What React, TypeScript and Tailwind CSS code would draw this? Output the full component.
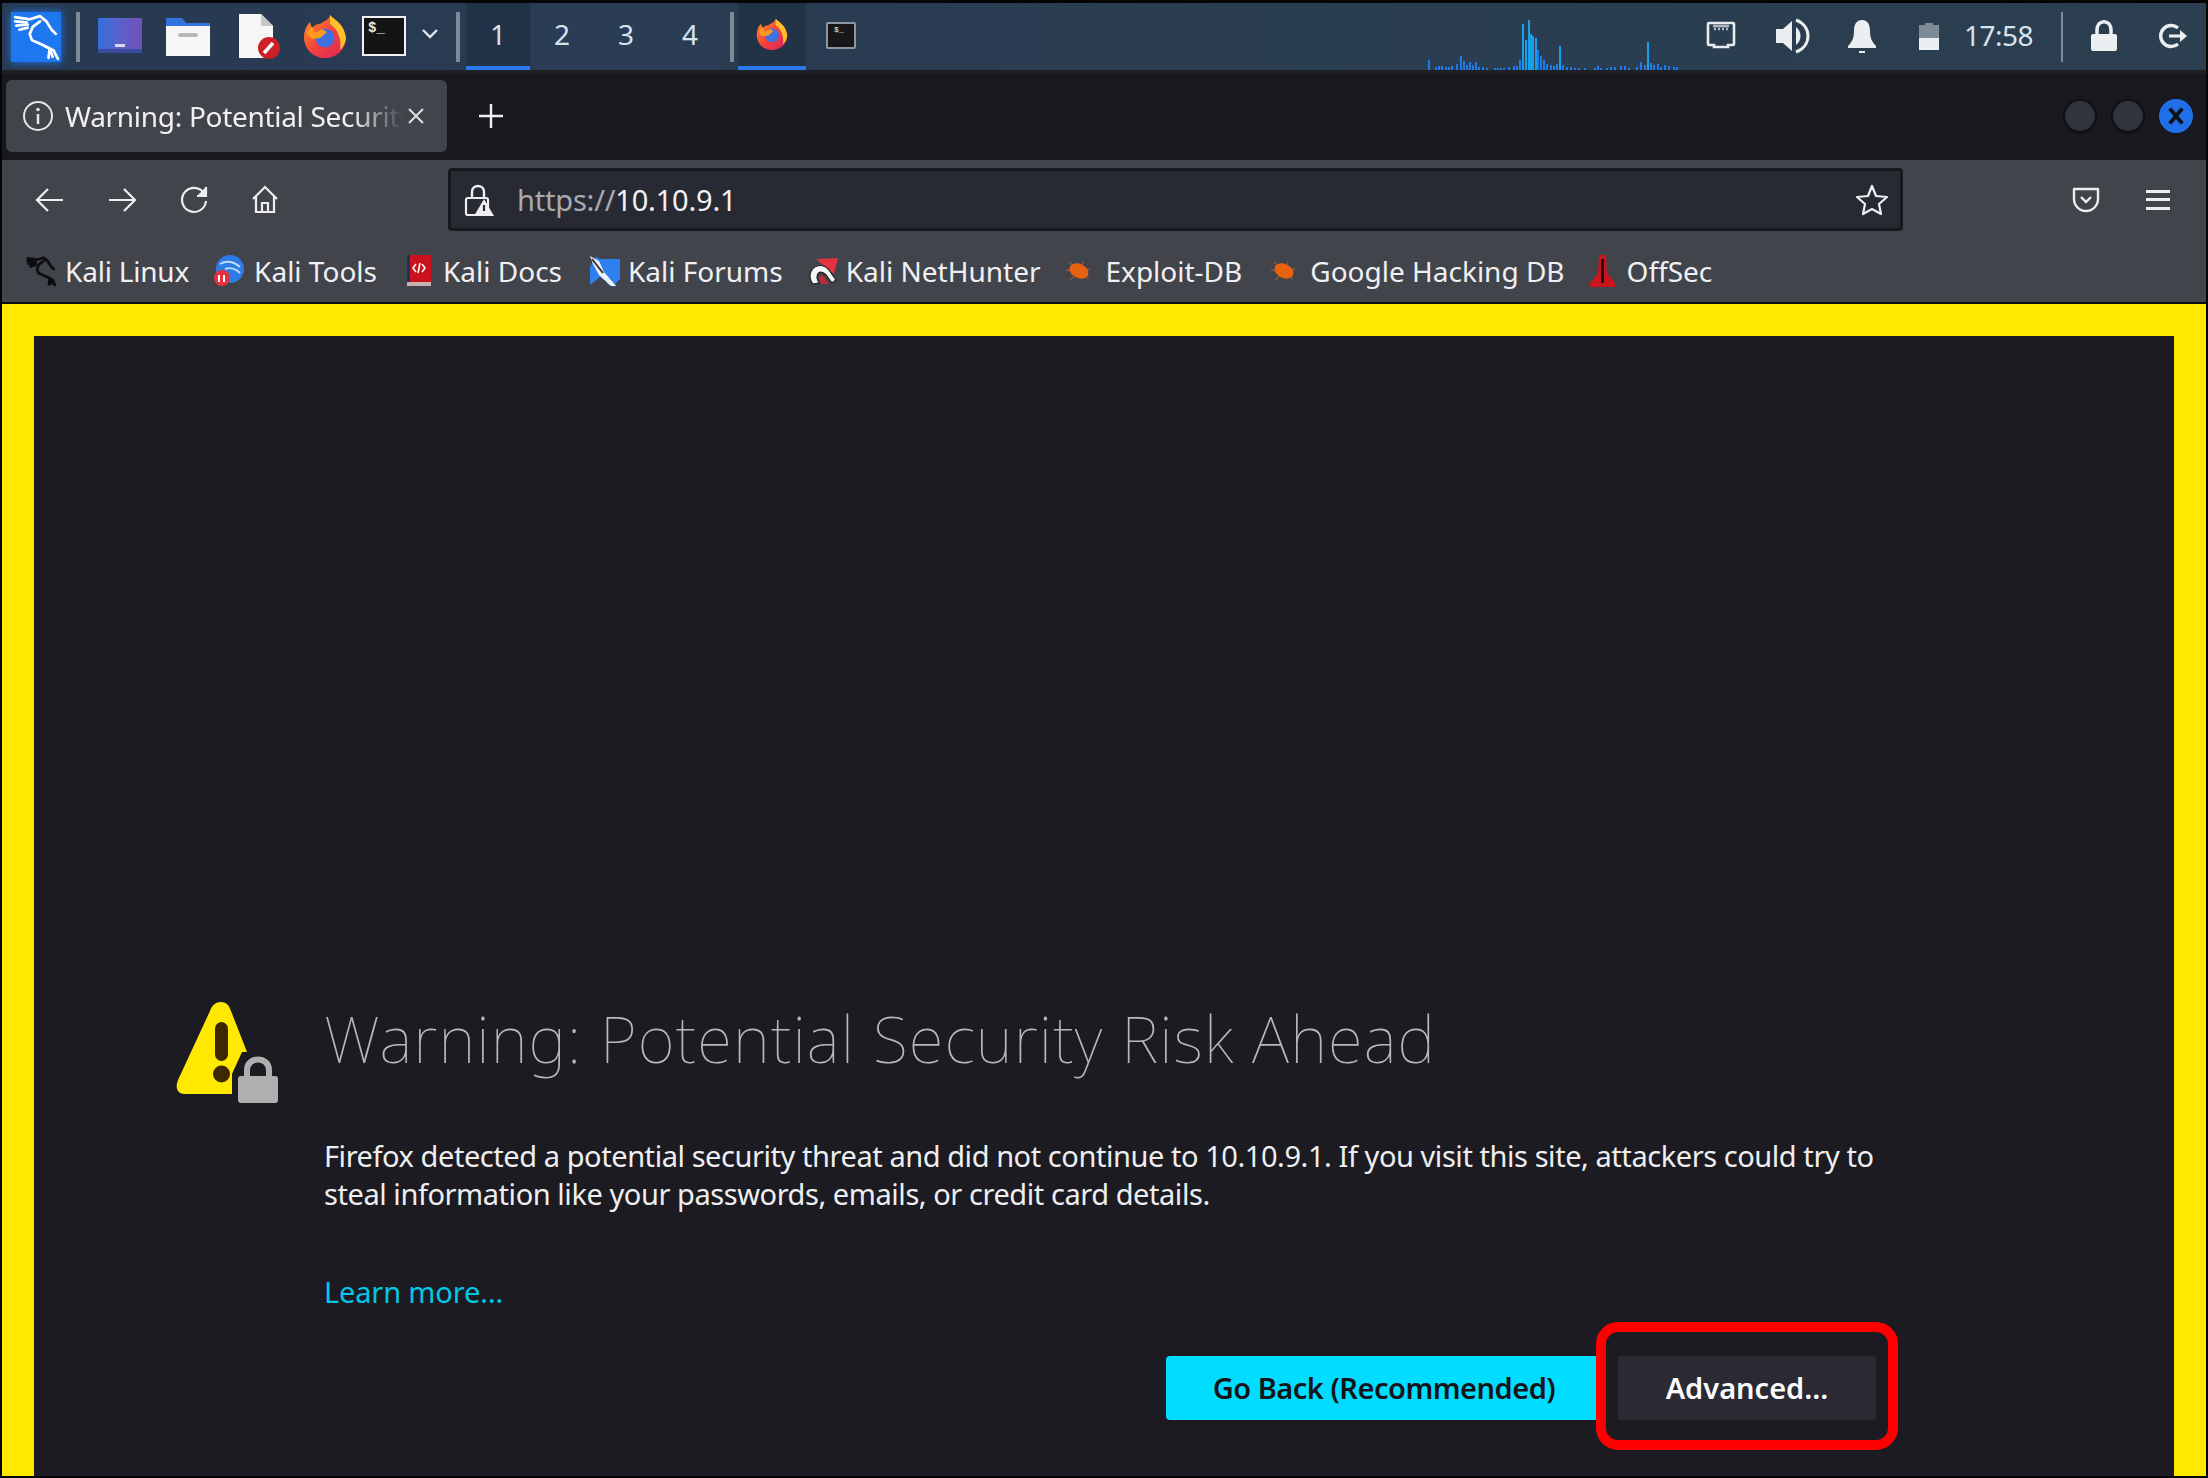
import type { ReactNode } from "react";

const graphBars = [
  [0, 10], [7, 3], [10, 4], [13, 4], [17, 3], [20, 3], [23, 4], [28, 6], [32, 14], [35, 9], [38, 5], [41, 8], [44, 5], [47, 8], [50, 3], [54, 3], [58, 2],
  [66, 2], [69, 2], [72, 2], [75, 2], [80, 3], [85, 4], [88, 4], [91, 10], [94, 46], [97, 30], [100, 50], [102, 36], [104, 34], [107, 32], [109, 20], [112, 14], [115, 10],
  [118, 6], [122, 5], [125, 4], [128, 6], [131, 24], [134, 5], [138, 3], [142, 3], [146, 2], [150, 2], [156, 2], [166, 2], [169, 4], [172, 2], [178, 2], [182, 3], [186, 3],
  [192, 4], [196, 4], [200, 2], [208, 3], [212, 8], [216, 5], [219, 28], [222, 7], [225, 5], [229, 6], [232, 3], [236, 5], [240, 4], [245, 3], [248, 3],
];

const Separator = ({ className }: { className: string }) => (
  <div className={`h-[50px] w-1 shrink-0 bg-[#7d8a98] ${className}`} />
);

const TaskIcon = ({ width, className, children }: { width: number; className: string; children: ReactNode }) => (
  <svg viewBox={`0 0 ${width} 48`} width={width} height={48} className={`shrink-0 ${className}`}>
    {children}
  </svg>
);

const KaliDragon = ({ color, width = 2.6 }: { color: string; width?: number }) => (
  <g fill="none" stroke={color} strokeWidth={width} strokeLinecap="round" strokeLinejoin="round">
    <path d="M3 5 L17 7 L27 4 L33 9 L38 17 L42 21" />
    <path d="M3 9 L14 10 M4 13 L15 12 M7 17 L15 15" />
    <path d="M27 9 L20 14 L17 21 L19 27 L28 31 L36 35 L39 43" />
    <path d="M32 33 L40 37 L44 45 M36 36 L35 44" />
  </g>
);

const Firefox = ({ size }: { size: number }) => (
  <svg viewBox="0 0 44 44" width={size} height={size} className="shrink-0">
    <defs>
      <linearGradient id={`fx${size}`} x1="0" y1="0" x2="1" y2="1">
        <stop offset="0" stopColor="#ff9a1f" />
        <stop offset="0.5" stopColor="#f5433c" />
        <stop offset="1" stopColor="#d9215a" />
      </linearGradient>
    </defs>
    <path d="M27 1 C31 6 41 9 43 24 C43 36 33 44 22 44 C9 44 1 34 1 23 C1 17 3 12 7 8 L9 15 C11 11 14 10 17 10 C21 7 26 6 27 1Z" fill={`url(#fx${size})`} />
    <path d="M27 1 C31 6 41 9 43 24 C42 30 40 33 37 36 C39 26 35 15 27 10Z" fill="#ffc02e" />
    <circle cx="22" cy="24" r="9.5" fill="#3f6fe0" />
    <path d="M4 19 L9 12 L12 19 L19 15 L24 18 L17 24 L8 25Z" fill="#ff9a1f" />
  </svg>
);

function BugIcon() {
  return (
    <svg viewBox="0 0 30 24" width={30} height={24} className="-mx-[2px] shrink-0">
      <path d="M5 3 L11 8 M2 11 L9 12 M6 21 L12 16 M19 3 L18 7 M26 10 L22 11 M24 20 L20 16" stroke="#8a5a3a" strokeWidth="1.4" />
      <ellipse cx="15" cy="12" rx="10" ry="7" transform="rotate(25 15 12)" fill="#e8620f" />
    </svg>
  );
}

const bookmarks: { label: string; icon: ReactNode; iconWidth: number; gap: number; next: number }[] = [
  {
    label: "Kali Linux",
    iconWidth: 32,
    gap: 8,
    next: 25,
    icon: <svg viewBox="0 0 46 48" width={32} height={32}><KaliDragon color="#0c0c0e" width={4} /></svg>,
  },
  {
    label: "Kali Tools",
    iconWidth: 30,
    gap: 10,
    next: 30,
    icon: (
      <svg viewBox="0 0 30 32" width={30} height={32}>
        <circle cx="16" cy="14" r="14" fill="#2d7be5" />
        <path d="M6 9 C13 5 20 7 26 12 M11 14 C16 12 22 14 26 18" stroke="#c3dcfa" strokeWidth="2" fill="none" />
        <circle cx="8" cy="23" r="8" fill="#e8303a" />
        <path d="M5 20 V27 M10 20 V27" stroke="#fff" strokeWidth="2" />
      </svg>
    ),
  },
  {
    label: "Kali Docs",
    iconWidth: 24,
    gap: 12,
    next: 26,
    icon: (
      <svg viewBox="0 0 24 32" width={24} height={32}>
        <rect x="0" y="0" width="24" height="27" fill="#c9121b" />
        <rect x="0" y="0" width="3" height="27" fill="#17305f" />
        <rect x="0" y="27" width="24" height="4" fill="#c4b3b3" />
        <path d="M9 9 L6 13 L9 17 M15 9 L18 13 L15 17 M13 8 L11 18" stroke="#fff" strokeWidth="1.6" fill="none" />
      </svg>
    ),
  },
  {
    label: "Kali Forums",
    iconWidth: 32,
    gap: 8,
    next: 23,
    icon: (
      <svg viewBox="0 0 32 32" width={32} height={32}>
        <path d="M8 4 H32 V24 L26 30 H20Z" fill="#2f80ed" />
        <path d="M2 12 L8 2 L12 4 L16 16 L28 30 L26 32 L12 22 L2 30Z" fill="#2f80ed" />
        <path d="M2 1 L11 6 L16 17 L28 31 L23 31 L11 20 L5 9Z" fill="#eef2f7" />
        <path d="M4 4 L15 18" stroke="#333" strokeWidth="2" />
      </svg>
    ),
  },
  {
    label: "Kali NetHunter",
    iconWidth: 34,
    gap: 6,
    next: 25,
    icon: (
      <svg viewBox="0 0 34 30" width={34} height={30}>
        <path d="M10 3 L32 2 L28 18 Z" fill="#e5323f" />
        <path d="M4 19 C6 8 17 7 23 14 L30 24 L26 27 L20 19 C15 14 11 16 11 22 L13 27 L7 28 C5 26 4 22 4 19Z" fill="#f6f6f6" stroke="#1d1d20" strokeWidth="1.2" />
        <path d="M13 21 C15 18 18 20 20 24 L23 28 L15 28Z" fill="#c4283a" />
      </svg>
    ),
  },
  {
    label: "Exploit-DB",
    iconWidth: 27,
    gap: 13,
    next: 29,
    icon: <BugIcon />,
  },
  {
    label: "Google Hacking DB",
    iconWidth: 26,
    gap: 13,
    next: 25,
    icon: <BugIcon />,
  },
  {
    label: "OffSec",
    iconWidth: 25,
    gap: 12,
    next: 0,
    icon: (
      <svg viewBox="0 0 25 32" width={25} height={32}>
        <path d="M9 0 H16 L17 18 L25 28 V32 H0 V28 L8 18Z" fill="#c9161c" />
        <path d="M12.5 4 V28" stroke="#2a0d0f" strokeWidth="3" />
      </svg>
    ),
  },
];

const Panel = () => (
  <div className="flex h-[67px] shrink-0 items-start bg-gradient-to-r from-[#283a52] to-[#2b3f50]">
    <div className="ml-[9px] mt-[9px] h-[50px] w-[50px] shrink-0 bg-[#1d78f0] shadow-[0_0_8px_#1d78f0]">
      <svg viewBox="0 0 46 48" width={50} height={50}><KaliDragon color="#ffffff" /></svg>
    </div>
    <Separator className="ml-[15px] mt-[9px]" />
    <div className="ml-[18px] mt-[15px] flex h-[35px] w-[44px] shrink-0 items-end justify-center bg-gradient-to-r from-[#2f6fdc] to-[#7350b8] pb-1 shadow-[inset_0_-4px_0_#3a4a9c]">
      <span className="mb-[2px] h-[3px] w-[10px] bg-[#d8d8e8]" />
    </div>
    <TaskIcon width={44} className="ml-6 mt-[9px]">
      <path d="M0 6 H16 L20 11 H44 V18 H0Z" fill="#2f74de" />
      <rect x="0" y="14" width="44" height="30" fill="#f6f6f6" />
      <rect x="12" y="21" width="20" height="4" rx="2" fill="#b8b8b8" />
    </TaskIcon>
    <TaskIcon width={42} className="ml-[29px] mt-[9px]">
      <path d="M0 2 H22 L34 14 V46 H0Z" fill="#f6f6f6" />
      <path d="M22 2 L34 14 H22Z" fill="#c8c8c8" />
      <circle cx="30" cy="36" r="11" fill="#cc1f28" />
      <path d="M25 41 L34 31" stroke="#fff" strokeWidth="3.5" />
    </TaskIcon>
    <div className="ml-[22px] mt-[11px]"><Firefox size={44} /></div>
    <div className="ml-[15px] mt-[13px] flex h-[40px] w-[44px] shrink-0 flex-col border-2 border-[#f2f2f2] bg-[#141414] pl-[4px] pt-[1px] font-['Liberation_Mono',monospace] text-[14px] leading-[18px] font-bold text-[#e8e8e8]">
      $_
    </div>
    <svg viewBox="0 0 16 10" width={16} height={10} className="ml-4 mt-[26px] shrink-0">
      <path d="M1 1 L8 8 L15 1" stroke="#e4e8ec" strokeWidth="2.4" fill="none" />
    </svg>
    <Separator className="ml-[18px] mt-[9px]" />
    <div className="ml-[6px] flex h-full font-['Noto_Sans',sans-serif] text-[28px] text-[#d6e2ee]">
      {["1", "2", "3", "4"].map((n, i) => (
        <div
          key={n}
          className={
            i === 0
              ? "flex w-[64px] items-center justify-center border-b-[4px] border-[#2a78ea] bg-[#233347] pb-[2px]"
              : "flex w-[64px] items-center justify-center bg-[#2a3d54] pb-[6px]"
          }
        >
          {n}
        </div>
      ))}
    </div>
    <Separator className="ml-[8px] mt-[9px]" />
    <div className="ml-[4px] flex h-full w-[68px] shrink-0 items-center justify-center border-b-[4px] border-[#2a78ea] bg-[#233347] pb-[2px]">
      <Firefox size={32} />
    </div>
    <div className="ml-[20px] mt-[19px] h-[27px] w-[30px] shrink-0 rounded-[2px] border-2 border-[#8d96a0] bg-[#171719] pl-[6px] font-['Liberation_Mono',monospace] text-[8px] leading-[12px] text-[#e8e8e8]">
      $_
    </div>
    <svg width={252} height={67} className="ml-[572px] shrink-0">
      {graphBars.map(([x, h]) => (
        <rect key={x} x={x} y={67 - h} width={2} height={h} fill={h > 20 ? "#16a0ea" : "#1e7ae8"} />
      ))}
    </svg>
    <TaskIcon width={30} className="ml-[26px] mt-[12px]">
      <path d="M3 8 H27 Q28 8 28 9 V29 Q28 30 27 30 H22 V32 H8 V30 H3 Q2 30 2 29 V9 Q2 8 3 8Z" fill="none" stroke="#e8ecef" strokeWidth="2.6" />
      <path d="M7 11 H23 M8 14 H10 M12 14 H14 M16 14 H18 M20 14 H22" stroke="#aeb7bf" strokeWidth="2.4" />
    </TaskIcon>
    <TaskIcon width={40} className="ml-[36px] mt-[11px]">
      <path d="M4 15 H11 L20 7 V37 L11 29 H4Z" fill="#eceff2" />
      <path d="M24 6 C40 12 40 32 24 38" stroke="#eceff2" strokeWidth="3" fill="none" />
      <path d="M24 13 C30 18 30 26 24 31Z" fill="#eceff2" />
    </TaskIcon>
    <TaskIcon width={30} className="ml-[35px] mt-[10px]">
      <path d="M15 7 C21 7 23 12 23 18 C23 25 25 29 29 33 V35 H1 V33 C5 29 7 25 7 18 C7 12 9 7 15 7Z" fill="#eceff2" />
      <rect x="12" y="38" width="6" height="2" fill="#eceff2" />
    </TaskIcon>
    <TaskIcon width={22} className="ml-[41px] mt-[20px]">
      <rect x="7" y="0" width="8" height="2" fill="#7d8c96" />
      <rect x="1" y="2" width="20" height="13" fill="#7d8c96" />
      <rect x="1" y="15" width="20" height="12" fill="#eceff2" />
    </TaskIcon>
    <div className="ml-[24px] mt-[14px] shrink-0 font-['Noto_Sans',sans-serif] text-[28px] leading-[36px] tracking-[-0.5px] text-[#d6e2ee]">
      17:58
    </div>
    <div className="ml-[28px] mt-[9px] h-[50px] w-[2px] shrink-0 bg-[#7d8a98]" />
    <TaskIcon width={28} className="ml-[27px] mt-[17px]">
      <path d="M7 16 V10 C7 -1 21 -1 21 10 V16" stroke="#eceff2" strokeWidth="3.5" fill="none" />
      <rect x="1" y="14" width="26" height="17" rx="2" fill="#eceff2" />
    </TaskIcon>
    <TaskIcon width={30} className="ml-[40px] mt-[12px]">
      <path d="M20 13 A10.5 10.5 0 1 0 20 29" stroke="#eceff2" strokeWidth="3.4" fill="none" />
      <path d="M11 21 H24" stroke="#eceff2" strokeWidth="3" />
      <path d="M22 15 L29 21 L22 27Z" fill="#eceff2" />
    </TaskIcon>
  </div>
);

const TabBar = () => (
  <div className="flex h-[90px] shrink-0 items-center border-t-[4px] border-[#1f2024] bg-[#18191e] pb-[2px] pl-[4px] font-['Noto_Sans',sans-serif]">
    <div className="flex h-[72px] w-[441px] shrink-0 items-center rounded-[6px] bg-[#42444c] pl-[16px]">
      <svg viewBox="0 0 32 32" width={32} height={32} className="shrink-0">
        <circle cx="16" cy="16" r="14" stroke="#e6e6e8" strokeWidth="2" fill="none" />
        <path d="M16 14 V24" stroke="#e6e6e8" strokeWidth="2.5" />
        <circle cx="16" cy="9.5" r="1.8" fill="#e6e6e8" />
      </svg>
      <div className="ml-[11px] w-[338px] overflow-hidden whitespace-nowrap text-[28px] tracking-[-0.3px] text-[#f0f0f2] [mask-image:linear-gradient(to_right,black_85%,transparent)]">
        Warning: Potential Security Risk Ahead
      </div>
      <svg viewBox="0 0 18 18" width={18} height={18} className="ml-[4px] shrink-0">
        <path d="M2 2 L16 16 M16 2 L2 16" stroke="#e6e6e8" strokeWidth="1.8" />
      </svg>
    </div>
    <svg viewBox="0 0 26 26" width={26} height={26} className="ml-[31px] shrink-0">
      <path d="M13 1 V25 M1 13 H25" stroke="#f0f0f2" strokeWidth="2.4" />
    </svg>
    <div className="ml-auto mr-[13px] flex gap-[14px]">
      <div className="h-[34px] w-[34px] rounded-full border-2 border-[#0f1014] bg-[#31343f]" />
      <div className="h-[34px] w-[34px] rounded-full border-2 border-[#0f1014] bg-[#31343f]" />
      <div className="flex h-[34px] w-[34px] items-center justify-center rounded-full bg-[#1f6fe8]">
        <svg viewBox="0 0 16 16" width={20} height={20}>
          <path d="M3 2 L13 14 M13 2 L3 14" stroke="#0e1116" strokeWidth="3" />
        </svg>
      </div>
    </div>
  </div>
);

const NavIcon = ({ className, children }: { className: string; children: ReactNode }) => (
  <svg viewBox="0 0 30 30" width={30} height={30} className={`shrink-0 ${className}`} fill="none" stroke="#eeeef0" strokeWidth="2.2">
    {children}
  </svg>
);

const Toolbar = () => (
  <div className="flex h-[144px] shrink-0 flex-col border-b-[2px] border-[#0c0c0e] bg-[#42444c] pl-[2px] font-['Noto_Sans',sans-serif]">
    <div className="flex h-[74px] shrink-0 items-center pt-[5px]">
      <NavIcon className="ml-[31px]">
        <path d="M28 15 H2 M13 4 L2 15 L13 26" />
      </NavIcon>
      <NavIcon className="ml-[42px]">
        <path d="M2 15 H28 M17 4 L28 15 L17 26" />
      </NavIcon>
      <NavIcon className="ml-[42px]">
        <path d="M26 10 A12 12 0 1 0 27 16" />
        <path d="M27 2 V11 H18" fill="#eeeef0" />
      </NavIcon>
      <NavIcon className="ml-[41px]">
        <path d="M3 14 L15 2 L27 14 M6 11 V27 H24 V11 M12 27 V18 H18 V27" />
      </NavIcon>
      <div className="ml-[168px] flex h-[63px] w-[1455px] shrink-0 items-center rounded-[4px] border-[3px] border-[#17181c] bg-[#282a33] pl-[12px]">
        <svg viewBox="0 0 32 34" width={32} height={34} className="shrink-0">
          <path d="M9 15 V9 C9 1 21 1 21 9 V15" stroke="#eeeef0" strokeWidth="2.4" fill="none" />
          <rect x="3" y="15" width="22" height="17" rx="2" stroke="#eeeef0" strokeWidth="2.2" fill="none" />
          <path d="M21 16 L31 33 H11Z" fill="#eeeef0" />
          <path d="M21 22 V28" stroke="#282a33" strokeWidth="2.2" />
        </svg>
        <div className="ml-[22px] text-[29px] leading-none tracking-[-0.2px]">
          <span className="text-[#a9aab0]">https://</span>
          <span className="text-[#f2f2f4]">10.10.9.1</span>
        </div>
        <svg viewBox="0 0 32 32" width={32} height={32} className="ml-auto mr-[12px] shrink-0">
          <path d="M16 2 L20 12 L31 13 L23 20 L25 30 L16 25 L7 30 L9 20 L1 13 L12 12Z" stroke="#eeeef0" strokeWidth="2.2" fill="none" strokeLinejoin="round" />
        </svg>
      </div>
      <svg viewBox="0 0 28 28" width={28} height={28} className="ml-[169px] shrink-0">
        <path d="M2 3 H26 V13 A12 12 0 0 1 2 13Z" stroke="#eeeef0" strokeWidth="2.4" fill="none" strokeLinejoin="round" />
        <path d="M9 11 L14 16 L19 11" stroke="#eeeef0" strokeWidth="2.4" fill="none" />
      </svg>
      <div className="ml-[46px] flex h-[20px] w-[24px] shrink-0 flex-col justify-between">
        <div className="h-[3px] bg-[#eeeef0]" />
        <div className="h-[3px] bg-[#eeeef0]" />
        <div className="h-[3px] bg-[#eeeef0]" />
      </div>
    </div>
    <div className="flex flex-1 items-center pl-[21px] pt-[5px] text-[28px] leading-none text-[#f0f0f2]">
      {bookmarks.map((b) => (
        <div
          key={b.label}
          className={`flex shrink-0 items-center whitespace-nowrap ${b.label === "Kali Linux" ? "tracking-[-0.2px]" : ""}`}
          style={{ marginRight: b.next }}
        >
          <div className="flex shrink-0 justify-center" style={{ width: b.iconWidth, marginRight: b.gap }}>
            {b.icon}
          </div>
          {b.label}
        </div>
      ))}
    </div>
  </div>
);

const WarningIcon = () => (
  <svg viewBox="0 0 102 101" width={102} height={101} className="mt-[3px] shrink-0">
    <path d="M45 0 C50 0 53 3 55 9 L78 68 L66 92 H8 C1 92 -1 85 2 78 L34 9 C36 3 40 0 45 0Z" fill="#ffe900" />
    <rect x="39" y="20" width="13" height="39" rx="6.5" fill="#3e2800" />
    <circle cx="45.5" cy="72" r="8.5" fill="#3e2800" />
    <path d="M56 101 V72 L66 50 H102 V101Z" fill="#1c1b22" />
    <path d="M71 76 V68 C71 54 93 54 93 68 V76" stroke="#afafaf" strokeWidth="6" fill="none" />
    <rect x="62" y="74" width="40" height="27" rx="3" fill="#afafaf" />
  </svg>
);

const ErrorPage = () => (
  <div className="relative flex min-h-0 flex-1 flex-col border-x-[32px] border-t-[32px] border-[#ffe900] bg-[#1c1b22] font-['Noto_Sans',sans-serif]">
    <div className="mt-[663px] flex pl-[142px]">
      <WarningIcon />
      <div className="ml-[46px] w-[1580px]">
        <h1 className="text-[64px] leading-[80px] font-[100] tracking-[1.15px] text-[#b8b8bc]">Warning: Potential Security Risk Ahead</h1>
        <p className="mt-[58px] text-[29px] leading-[38px] tracking-[-0.44px] text-[#eeeef0]">
          Firefox detected a potential security threat and did not continue to 10.10.9.1. If you visit this site, attackers could try to
          <br />
          steal information like your passwords, emails, or credit card details.
        </p>
        <a className="mt-[60px] block text-[29px] leading-[38px] tracking-[-0.15px] text-[#00c8e6]">Learn more…</a>
      </div>
    </div>
    <div className="mt-[45px] flex pl-[1132px]">
      <button className="h-[64px] w-[436px] rounded-[4px] bg-[#00ddff] text-[29px] font-semibold tracking-[-0.5px] text-[#15141a]">Go Back (Recommended)</button>
      <button className="ml-[16px] h-[64px] w-[258px] rounded-[4px] bg-[#2b2a33] text-[29px] font-semibold text-[#fbfbfe]">Advanced…</button>
    </div>
    <div className="absolute left-[1562px] top-[986px] h-[128px] w-[302px] rounded-[22px] border-[10px] border-[#ff0000]" />
  </div>
);

export default function App() {
  return (
    <div className="flex h-[1478px] w-[2208px] flex-col overflow-hidden border-x-[2px] border-t-[3px] border-b-[2px] border-[#050505] bg-black">
      <Panel />
      <TabBar />
      <Toolbar />
      <ErrorPage />
    </div>
  );
}
